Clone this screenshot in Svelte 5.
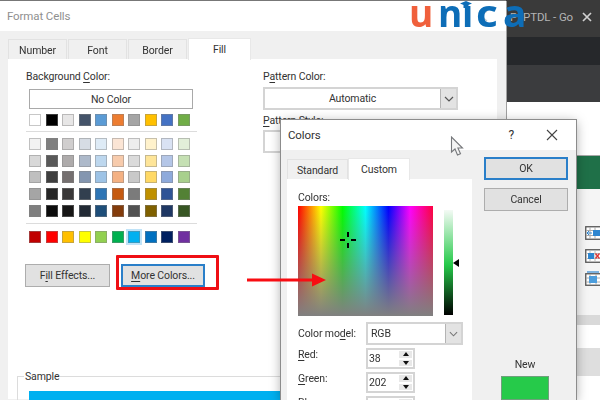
<script>
  const row0 = ['#ffffff','#000000','#e7e6e6','#44546a','#5b9bd5','#ed7d31','#a5a5a5','#ffc000','#4472c4','#70ad47'];
  const tints = [
    '#f2f2f2','#7f7f7f','#d0cece','#d6dce4','#deebf6','#fbe5d5','#ededed','#fff2cc','#d9e2f3','#e2efd9',
    '#d8d8d8','#595959','#aeabab','#adb9ca','#bdd7ee','#f7cbac','#dbdbdb','#fee599','#b4c6e7','#c5e0b3',
    '#bfbfbf','#3f3f3f','#757070','#8496b0','#9dc3e6','#f4b183','#c9c9c9','#ffd965','#8eaadb','#a8d08d',
    '#a5a5a5','#262626','#3a3838','#323f4f','#2e75b5','#c55a11','#7b7b7b','#bf9000','#2f5496','#538135',
    '#7f7f7f','#0c0c0c','#171616','#222a35','#1e4e79','#833c0b','#525252','#7f6000','#1f3864','#375623'
  ];
  const standard = ['#c00000','#ff0000','#ffc000','#ffff00','#92d050','#00b050','#00b0f0','#0070c0','#002060','#7030a0'];
</script>

<div class="screen">
  <div class="backdrop">
    <div class="bar-title">
      <span class="doc-p">P</span>
      <span class="doc">PTDL - Go</span>
      <svg class="doc-x" width="12" height="12" viewBox="0 0 12 12"><path d="M2 2l8 8M10 2l-8 8" stroke="#d0d0d0" stroke-width="1.700"/></svg>
    </div>
    <div class="bar-dark"></div>
    <div class="bar-mid"></div>
    <div class="sheet">
      <div class="green"></div>
      <div class="tools">
        <svg width="16" height="14" viewBox="0 0 16 14"><rect x=".75" y=".75" width="15" height="12.500" fill="#fff" stroke="#555" stroke-width="1.300"/><path d="M5 1v12M10 1v12M1 4.500h15M1 9.500h15" stroke="#aaa"/><path d="M8 4h8v6H8z" fill="#2e86d0"/><path d="M7 7H2M4 5L2 7l2 2" stroke="#2e86d0" fill="none"/></svg>
        <svg width="16" height="14" viewBox="0 0 16 14"><rect x=".75" y=".75" width="15" height="12.500" fill="#fff" stroke="#555" stroke-width="1.300"/><path d="M5 1v12M10 1v12M1 4.500h15M1 9.500h15" stroke="#bbb"/><path d="M3 4h6v6H3z" fill="#2e86d0"/><path d="M10.500 4.500l4 5M14.500 4.500l-4 5" stroke="#e03535" stroke-width="1.400"/></svg>
        <svg width="16" height="15" viewBox="0 0 16 15"><rect x=".75" y="2.750" width="15" height="11.500" fill="#fff" stroke="#555" stroke-width="1.300"/><path d="M5 3v11M11 3v11M1 7h15M1 11h15" stroke="#aaa"/><path d="M4 5h8v7H4z" fill="#4c9ddc"/><path d="M2 1h12" stroke="#2e86d0" stroke-width="1.200"/></svg>
      </div>
    </div>
    <div class="band"></div>
    <div class="blank"></div>
    <div class="band tall"></div>
  </div>

  <section class="format">
    <header class="title-back">
      <span>Format Cells</span>
      <svg class="back-chev" width="10" height="12" viewBox="0 0 10 12"><path d="M8 1L2 6l6 5" fill="none" stroke="#c9c9c9" stroke-width="1.300"/></svg>
    </header>
    <div class="tabs back-tabs">
      <span class="tab">Number</span>
      <span class="tab">Font</span>
      <span class="tab">Border</span>
      <span class="tab active">Fill</span>
    </div>
    <div class="panel">
      <div class="col-left">
        <div class="label"><span>Background <u>C</u>olor:</span></div>
        <div class="nocolor">No Color</div>
        <div class="grid first">
          {#each row0 as c}<i class="sw" style="background:{c}"></i>{/each}
        </div>
        <hr />
        <div class="grid tints">
          {#each tints as c}<i class="sw" style="background:{c}"></i>{/each}
        </div>
        <hr class="second" />
        <div class="grid">
          {#each standard as c, n}<i class="sw" class:sel={n === 6} style="background:{c}"></i>{/each}
        </div>
        <div class="btns">
          <div class="btn"><span>F<u>i</u>ll Effects...</span></div>
          <div class="btn focus"><span><u>M</u>ore Colors...</span></div>
        </div>
      </div>
      <div class="col-right">
        <div class="label"><span>P<u>a</u>ttern Color:</span></div>
        <div class="combo main-combo">
          <span class="combo-text">Automatic</span>
          <span class="chev"><svg width="10" height="6" viewBox="0 0 10 6"><path d="M1 1l4 4 4-4" fill="none" stroke="#555" stroke-width="1.200"/></svg></span>
        </div>
        <div class="label style-label"><span><u>P</u>attern Style:</span></div>
        <div class="combo short"></div>
      </div>
      <div class="sample">
        <span class="sample-label">Sample</span>
        <div class="sample-fill"></div>
      </div>
    </div>
  </section>

  <section class="colors">
    <header class="title-front">
      <span>Colors</span>
      <span class="help">?</span>
      <svg width="12" height="12" viewBox="0 0 12 12"><path d="M1 1l10 10M11 1L1 11" stroke="#444" stroke-width="1.100"/></svg>
    </header>
    <div class="front-body">
      <div class="front-left">
        <div class="tabs front-tabs">
          <span class="tab">Standard</span>
          <span class="tab active">Custom</span>
        </div>
        <div class="front-panel">
          <div class="label colors-label">Colors:</div>
          <div class="picker">
            <div class="spectrum">
              <svg class="cross" width="16" height="16" viewBox="0 0 16 16"><path d="M8 0v5M8 11v5M0 8h5M11 8h5" stroke="#000" stroke-width="2"/></svg>
            </div>
            <div class="lum"></div>
            <span class="lum-mark"></span>
          </div>
          <div class="field model">
            <span class="field-name">Color mo<u>d</u>el:</span>
            <div class="combo model-combo">
              <span class="model-text">RGB</span>
              <span class="chev"><svg width="9" height="6" viewBox="0 0 10 6"><path d="M1 1l4 4 4-4" fill="none" stroke="#777" stroke-width="1.200"/></svg></span>
            </div>
          </div>
          <div class="field">
            <span class="field-name"><u>R</u>ed:</span>
            <div class="spin"><span class="val">38</span><span class="arrows"><b class="up"></b><b class="down"></b></span></div>
          </div>
          <div class="field">
            <span class="field-name"><u>G</u>reen:</span>
            <div class="spin"><span class="val">202</span><span class="arrows"><b class="up"></b><b class="down"></b></span></div>
          </div>
          <div class="field">
            <span class="field-name"><u>B</u>lue:</span>
            <div class="spin"><span class="val"></span><span class="arrows"><b class="up"></b><b class="down"></b></span></div>
          </div>
        </div>
      </div>
      <div class="front-right">
        <div class="btn ok"><span>OK</span></div>
        <div class="btn cancel"><span>Cancel</span></div>
        <div class="grow"></div>
        <div class="new">New</div>
        <div class="new-swatch"></div>
      </div>
    </div>
  </section>

  <div class="logo"><span class="u">u</span><span class="n">n</span><span class="i">ı</span><span class="c">c</span><span class="a">a</span>
    <svg class="cap" width="12" height="7" viewBox="0 0 12 7"><path d="M6 0l6 2.500L6 5 0 2.500z M3.500 4h5v3h-5z" fill="#0d6db7"/></svg>
  </div>

  <div class="callout"></div>
  <svg class="arrow" width="84" height="16" viewBox="0 0 84 16"><path d="M0 6.500h65v-5l14 6.500-14 6.500v-5H0z" fill="#f80d12"/></svg>
  <svg class="pointer" width="14" height="21" viewBox="0 0 14 21"><path d="M1.500 1v15l3.500-3 2.500 6 3-1.300-2.600-5.700h4.600z" fill="#f4f4f4" stroke="#77797c" stroke-width="1.100"/></svg>
</div>

<style>
  :global(body) { margin: 0; overflow: hidden; background: #fff; }
  .screen {
    position: relative; width: 600px; height: 400px; overflow: hidden;
    font-family: Roboto, "Noto Sans", sans-serif; font-size: 10.5px; letter-spacing: -0.12px; color: #333;
    filter: blur(0.45px);
  }
  u { text-underline-offset: 1.5px; text-decoration-thickness: 1px; }

  .backdrop { position: absolute; inset: 0 0 0 506px; display: flex; flex-direction: column; background: #fff; }
  .bar-title { height: 37px; background: #3a3a3a; display: flex; align-items: center; padding: 0 7px 3px 4px; color: #b4b4b4; font-size: 11.5px; flex: none; box-sizing: border-box; }
  .doc-p { width: 13px; flex: none; }
  .doc { white-space: nowrap; flex: 1; }
  .bar-dark { height: 28px; background: #26282b; flex: none; }
  .bar-mid { height: 37px; background: #3b3c3e; flex: none; }
  .sheet { height: 213px; background: #fff; display: flex; flex-direction: column; flex: none; padding-top: 53px; box-sizing: border-box; }
  .green { height: 34px; background: #1f7048; border-top: 1px solid #a8a8a8; box-sizing: border-box; flex: none; }
  .tools { flex: 1; background: #f5f5f5; display: flex; flex-direction: column; gap: 8.500px; padding: 37px 0 0 79px; overflow: hidden; min-height: 0; }
  .tools svg { flex: none; }
  .band { height: 10px; background: #d9d9d9; flex: none; }
  .blank { height: 23px; background: #fff; flex: none; }
  .band.tall { height: 28px; background: #dedede; flex: none; }

  .format { position: absolute; left: 0; top: 1px; width: 506px; height: 399px; background: #f0f0f0; display: flex; flex-direction: column; box-shadow: 0 -1px 0 0 #777, 1px 0 0 0 #a0a0a0; }
  .title-back { height: 30px; background: #fff; color: #8f8f8f; font-size: 11.5px; display: flex; align-items: center; justify-content: space-between; padding: 0 17px 0 7px; flex: none; box-sizing: border-box; }
  .tabs { display: flex; flex: none; }
  .back-tabs { padding: 7px 0 0 8px; height: 21px; align-items: flex-end; }
  .tab { background: #f0f0f0; border: 1px solid #e2e2e2; border-bottom: 0; width: 59px; height: 20px; display: flex; align-items: center; justify-content: center; box-sizing: border-box; margin-right: 1px; color: #333; padding-top: 1px; }
  .tab.active { background: #fff; height: 22px; width: 63px; border-color: #e8e8e8; position: relative; z-index: 1; margin-bottom: -1px; padding-top: 0; }
  .panel { position: relative; flex: none; margin-left: 8px; width: 489px; height: 340px; background: #fff; display: flex; padding: 8px 0 0 18px; box-sizing: border-box; gap: 66px; }
  .col-left { width: 171px; flex: none; }
  .label { height: 19px; display: flex; align-items: center; white-space: nowrap; }
  .nocolor { width: 164px; height: 20px; margin-left: 3px; margin-top: 3px; border: 1px solid #a9a9a9; box-sizing: border-box; background: #fff; display: flex; align-items: center; justify-content: center; }
  .grid { display: grid; grid-template-columns: repeat(10, 12px); column-gap: 4.55px; row-gap: 4.7px; margin-left: 3px; }
  .grid.first { margin-top: 5px; }
  .sw { display: block; width: 12px; height: 12px; box-sizing: border-box; border: 1px solid rgba(130,130,130,.45); }
  .sw.sel { box-shadow: 0 0 0 2px #bfe3f8; }
  hr { border: 0; height: 1px; background: #dcdcdc; margin: 5px 0 6px; }
  hr.second { margin: 6px 0 7px; }
  .btns { display: flex; gap: 11px; margin-top: 21px; margin-left: -1px; }
  .btn { height: 23px; width: 85px; flex: none; background: #e1e1e1; border: 1px solid #adadad; box-sizing: border-box; display: flex; align-items: center; justify-content: center; color: #333; }
  .btn.focus { border: 2px solid #2a7fc9; width: 84px; }
  .col-right { width: 195px; flex: none; }
  .combo { height: 23px; border: 2px solid #d4d4d4; background: #fff; display: flex; box-sizing: border-box; }
  .main-combo { margin-top: 1px; }
  .combo-text { flex: 1; display: flex; align-items: center; justify-content: center; }
  .chev { width: 15px; background: #e3e3e3; border-left: 1px solid #b4b4b4; display: flex; align-items: center; justify-content: center; flex: none; }
  .style-label { margin-top: 1px; }

  .sample { position: absolute; left: 9px; top: 317px; width: 470px; height: 40px; border: 1px solid #dcdcdc; box-sizing: border-box; padding: 14px 11px 0; }
  .sample-label { position: absolute; left: 6px; top: -7px; background: #fff; padding: 0 1px; }
  .sample-fill { height: 30px; background: #00b0f0; }

  .colors { position: absolute; left: 281px; top: 120px; width: 295px; height: 280px; background: #f0f0f0; display: flex; flex-direction: column; box-shadow: 0 0 0 1px #8c8c8c, 0 2px 11px rgba(0,0,0,.35); }
  .title-front { height: 30px; background: #fff; display: flex; align-items: center; padding: 0 18px 0 7px; font-size: 11.5px; color: #333; flex: none; }
  .title-front span:first-child { flex: 1; }
  .help { margin-right: 32px; font-size: 12px; }
  .front-body { display: flex; flex: 1; min-height: 0; padding-left: 6px; }
  .front-left { width: 185px; flex: none; padding-top: 8px; box-sizing: border-box; display: flex; flex-direction: column; }
  .front-tabs { align-items: flex-end; height: 21px; }
  .front-tabs .tab { width: 61px; height: 20px; margin-right: 0; }
  .front-tabs .tab.active { width: 62px; height: 22px; }
  .front-panel { flex: 1; background: #fff; padding: 10px 0 0 11px; box-sizing: border-box; overflow: hidden; }
  .colors-label { height: 16px; }
  .picker { position: relative; display: flex; gap: 11px; align-items: flex-start; height: 112px; margin-top: 1px; }
  .spectrum { position: relative; width: 135px; height: 110px; flex: none;
    background:
      linear-gradient(to bottom, rgba(128,128,128,0) 0%, #808080 100%),
      linear-gradient(to right, #ff0000, #ffff00 17%, #00ff00 33%, #00ffff 50%, #0000ff 67%, #ff00ff 83%, #ff0040);
  }
  .cross { position: absolute; left: 42px; top: 26px; }
  .lum { width: 9px; height: 105px; margin-top: 4px; flex: none; background: linear-gradient(to bottom, #f4faf5, #26ca4a 52%, #000 100%); }
  .lum-mark { position: absolute; left: 155px; top: 53px; width: 0; height: 0; border: 4px solid transparent; border-right: 6px solid #000; border-left: 0; }
  .field { display: flex; align-items: flex-start; margin-top: 3px; }
  .field.model { margin-top: 4px; margin-bottom: 3px; align-items: center; }
  .field-name { width: 68px; flex: none; white-space: nowrap; }
  .model-combo { width: 97px; height: 23px; flex: none; }
  .model-text { flex: 1; padding: 0 0 0 3px; display: flex; align-items: center; }
  .spin { width: 49px; height: 21px; border: 2px solid #d4d4d4; background: #fff; box-sizing: border-box; display: flex; flex: none; }
  .val { flex: 1; display: flex; align-items: center; padding-left: 1px; }
  .arrows { width: 15px; display: flex; flex-direction: column; flex: none; }
  .arrows b { flex: 1; background: #e8e8e8; border: 1px solid #fff; display: flex; align-items: center; justify-content: center; }
  .arrows b::after { content: ""; width: 0; height: 0; border: 3px solid transparent; }
  .up::after { border-bottom: 4px solid #111 !important; border-top: 0 !important; }
  .down::after { border-top: 4px solid #111 !important; border-bottom: 0 !important; }

  .front-right { flex: 1; display: flex; flex-direction: column; padding: 7px 0 0 12px; min-width: 0; }
  .ok { width: 84px; border: 2px solid #2a7fc9; }
  .cancel { width: 84px; margin-top: 8px; }
  .grow { flex: 1; }
  .new { width: 84px; text-align: center; height: 15px; margin-left: -1px; line-height: 15px; }
  .new-swatch { width: 48px; height: 24px; margin-left: 17px; margin-top: 4px; background: #26ca4a; border: 1px solid #6fa07c; box-sizing: border-box; }

  .logo { position: absolute; left: 409px; top: 0; width: 118px; display: flex; font-family: "Open Sans", sans-serif; font-weight: 700; font-size: 37px; line-height: 26px; letter-spacing: 0; white-space: nowrap; }
  .logo span { display: block; flex: none; }
  .u { color: #f0603c; width: 29px; }
  .n { color: #0d6db7; width: 24px; }
  .i { color: #0d6db7; width: 14px; }
  .c { color: #0d6db7; width: 27px; transform: scaleX(1.15); transform-origin: left; }
  .a { color: #0d6db7; transform: scaleX(1.05); transform-origin: left; }
  .cap { position: absolute; left: 51px; top: 1px; }

  .callout { position: absolute; left: 116px; top: 255px; width: 103px; height: 35px; border: 3px solid #ef0f14; box-sizing: border-box; border-radius: 1px; }
  .arrow { position: absolute; left: 247px; top: 272px; }
  .pointer { position: absolute; left: 450px; top: 136px; }
</style>
